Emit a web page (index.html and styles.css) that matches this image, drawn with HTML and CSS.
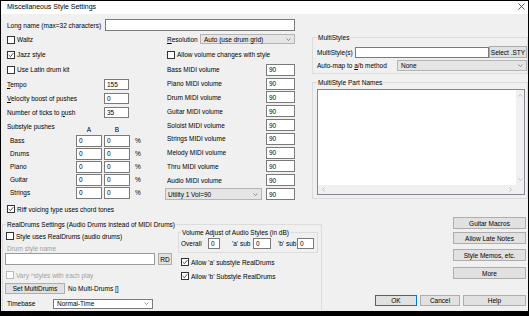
FILE: index.html
```html
<!DOCTYPE html>
<html lang="en">
<head>
    <meta charset="UTF-8">
    <meta name="viewport" content="width=device-width, initial-scale=1.0">
    <title>Miscellaneous Style Settings</title>
    <link rel="stylesheet" href="styles.css">
</head>
<body>
    <div class="dialog">
        <div class="titlebar">
            <span>Miscellaneous Style Settings</span>
            <svg class="close" width="7" height="7" viewBox="0 0 7 7"><path d="M0.5 0.5L6.5 6.5M6.5 0.5L0.5 6.5" stroke="#333" stroke-width="0.8"/></svg>
        </div>

        <div class="top">
            <div class="main">
                <div class="row name-row">
                    <span class="name-label">Long name (max=32 characters)</span>
                    <span class="edit name-edit"></span>
                </div>

                <div class="cols">
                    <!-- left column -->
                    <div class="left">
                        <div class="check-row"><span class="cb"></span>Waltz</div>
                        <div class="check-row"><span class="cb"><svg width="6" height="6" viewBox="0 0 6 6"><path d="M0.7 3L2.4 4.7L5.3 1.2" fill="none" stroke="#222" stroke-width="0.8"/></svg></span>Jazz style</div>
                        <div class="check-row"><span class="cb"></span>Use Latin drum kit</div>

                        <div class="row field-row"><span class="field-label"><u>T</u>empo</span><span class="edit short">155</span></div>
                        <div class="row field-row"><span class="field-label"><u>V</u>elocity boost of pushes</span><span class="edit short">0</span></div>
                        <div class="row field-row"><span class="field-label">Number of ticks to <u>p</u>ush</span><span class="edit short">35</span></div>

                        <div class="pushes">
                            <span>Substyle pushes</span><span class="col-head">A</span><span class="col-head">B</span><span></span>
                            <span class="push-label">Bass</span><span class="edit">0</span><span class="edit">0</span><span class="pct">%</span>
                            <span class="push-label">Drums</span><span class="edit">0</span><span class="edit">0</span><span class="pct">%</span>
                            <span class="push-label">Piano</span><span class="edit">0</span><span class="edit">0</span><span class="pct">%</span>
                            <span class="push-label">Guitar</span><span class="edit">0</span><span class="edit">0</span><span class="pct">%</span>
                            <span class="push-label">Strings</span><span class="edit">0</span><span class="edit">0</span><span class="pct">%</span>
                        </div>

                        <div class="check-row riff-row"><span class="cb"><svg width="6" height="6" viewBox="0 0 6 6"><path d="M0.7 3L2.4 4.7L5.3 1.2" fill="none" stroke="#222" stroke-width="0.8"/></svg></span>Riff voicing type uses chord tones</div>
                    </div>

                    <!-- middle column -->
                    <div class="middle">
                        <div class="row res-row">
                            <span class="res-label"><u>R</u>esolution</span>
                            <span class="combo res-combo">Auto (use drum grid)<svg width="5" height="3" viewBox="0 0 5 3"><path d="M0.5 0.5L2.5 2.5L4.5 0.5" fill="none" stroke="#666" stroke-width="0.7"/></svg></span>
                        </div>
                        <div class="check-row allow-row"><span class="cb"></span>Allow volume changes with style</div>

                        <div class="vol">
                            <span>Bass MIDI volume</span><span class="edit">90</span>
                            <span>Piano MIDI volume</span><span class="edit">90</span>
                            <span>Drum MIDI volume</span><span class="edit">90</span>
                            <span>Guitar MIDI volume</span><span class="edit">90</span>
                            <span>Soloist MIDI volume</span><span class="edit">90</span>
                            <span>Strings MIDI volume</span><span class="edit">90</span>
                            <span>Melody MIDI volume</span><span class="edit">90</span>
                            <span>Thru MIDI volume</span><span class="edit">90</span>
                            <span>Audio MIDI volume</span><span class="edit">90</span>
                            <span class="combo util-combo">Utility 1 Vol=90<svg width="5" height="3" viewBox="0 0 5 3"><path d="M0.5 0.5L2.5 2.5L4.5 0.5" fill="none" stroke="#666" stroke-width="0.7"/></svg></span><span class="edit">90</span>
                        </div>
                    </div>
                </div>
            </div>

            <!-- right column -->
            <div class="right">
                <fieldset class="group multi-group">
                    <legend>MultiStyles</legend>
                    <div class="row multi-row">
                        <span class="multi-label">MultiStyle(s)</span>
                        <span class="edit multi-edit"></span>
                        <span class="btn sty-btn">Select .STY</span>
                    </div>
                    <div class="row map-row">
                        <span class="map-label">Auto-map to <u>a</u>/b method</span>
                        <span class="combo map-combo">None<svg width="5" height="3" viewBox="0 0 5 3"><path d="M0.5 0.5L2.5 2.5L4.5 0.5" fill="none" stroke="#666" stroke-width="0.7"/></svg></span>
                    </div>
                </fieldset>

                <fieldset class="group parts-group">
                    <legend>MultiStyle Part Names</legend>
                    <div class="listbox">
                        <div class="list-area"></div>
                        <div class="vscroll">
                            <svg width="5" height="3" viewBox="0 0 5 3"><path d="M0.5 2.5L2.5 0.5L4.5 2.5" fill="none" stroke="#aaa" stroke-width="0.7"/></svg>
                            <svg width="5" height="3" viewBox="0 0 5 3"><path d="M0.5 0.5L2.5 2.5L4.5 0.5" fill="none" stroke="#aaa" stroke-width="0.7"/></svg>
                        </div>
                        <div class="hscroll">
                            <svg width="3" height="5" viewBox="0 0 3 5"><path d="M2.5 0.5L0.5 2.5L2.5 4.5" fill="none" stroke="#aaa" stroke-width="0.7"/></svg>
                            <svg width="3" height="5" viewBox="0 0 3 5"><path d="M0.5 0.5L2.5 2.5L0.5 4.5" fill="none" stroke="#aaa" stroke-width="0.7"/></svg>
                        </div>
                        <div class="corner"></div>
                    </div>
                </fieldset>
            </div>
        </div>

        <div class="bottom">
            <fieldset class="group realdrums">
                <legend>RealDrums Settings (Audio Drums instead of MIDI Drums)</legend>
                <div class="rd-cols">
                    <div class="rd-left">
                        <div class="check-row rd-check"><span class="cb"></span>Style uses RealDrums (audio drums)</div>
                        <div class="disabled drum-name">Drum style name</div>
                        <div class="row drum-row">
                            <span class="edit drum-edit"></span>
                            <span class="btn rd-btn">RD</span>
                        </div>
                        <div class="check-row rd-check vary-row disabled"><span class="cb off"></span>Vary ^styles with each play</div>
                        <div class="row multidrums-row">
                            <span class="btn multi-btn">Set MultiDrums</span>
                            <span>No Multi-Drums []</span>
                        </div>
                        <div class="row timebase-row">
                            <span class="timebase-label">Timebase</span>
                            <span class="combo timebase-combo">Normal-Time<svg width="5" height="3" viewBox="0 0 5 3"><path d="M0.5 0.5L2.5 2.5L4.5 0.5" fill="none" stroke="#666" stroke-width="0.7"/></svg></span>
                        </div>
                    </div>

                    <div class="rd-right">
                        <fieldset class="group volume-group">
                            <legend>Volume Adjust of Audio Styles (in dB)</legend>
                            <div class="row adjust-row">
                                <span class="adj-overall">Overall</span>
                                <span class="edit adj-edit-o">0</span>
                                <span class="adj-a">'a' sub</span>
                                <span class="edit adj-edit-a">0</span>
                                <span class="adj-b">'b' sub</span>
                                <span class="edit adj-edit-b">0</span>
                            </div>
                        </fieldset>
                        <div class="check-row sub-check first"><span class="cb"><svg width="6" height="6" viewBox="0 0 6 6"><path d="M0.7 3L2.4 4.7L5.3 1.2" fill="none" stroke="#222" stroke-width="0.8"/></svg></span>Allow 'a' substyle RealDrums</div>
                        <div class="check-row sub-check"><span class="cb"><svg width="6" height="6" viewBox="0 0 6 6"><path d="M0.7 3L2.4 4.7L5.3 1.2" fill="none" stroke="#222" stroke-width="0.8"/></svg></span>Allow 'b' Substyle RealDrums</div>
                    </div>
                </div>
            </fieldset>

            <div class="actions">
                <div class="side-buttons">
                    <span class="btn side-btn">Guitar Macros</span>
                    <span class="btn side-btn late">Allow Late Notes</span>
                    <span class="btn side-btn memos">Style Memos, etc.</span>
                    <span class="btn side-btn more">More</span>
                </div>
                <div class="row ok-row">
                    <span class="btn ok-btn">OK</span>
                    <span class="btn cancel-btn">Cancel</span>
                    <span class="btn help-btn">Help</span>
                </div>
            </div>
        </div>
    </div>
</body>
</html>
```

FILE: styles.css
```css
body {
    margin: 0;
    font-family: "Liberation Sans", Arial, sans-serif;
    font-size: 6.5px;
    color: #000;
    background: #fff;
}
.dialog {
    width: 529px;
    height: 316px;
    box-sizing: border-box;
    border: 1px solid #000;
    border-bottom-width: 5px;
    background: #f0f0f0;
    overflow: hidden;
}
.titlebar {
    height: 13px;
    box-sizing: border-box;
    padding: 0 3px 2px 6px;
    background: #fff;
    display: flex;
    justify-content: space-between;
    align-items: center;
    font-size: 7px;
}
.row {
    display: flex;
    align-items: center;
}
u {
    text-decoration-thickness: 0.5px;
    text-underline-offset: 1px;
}

/* controls */
.edit {
    box-sizing: border-box;
    height: 12px;
    border: 1px solid #7a7a7a;
    background: #fff;
    padding-left: 2px;
    display: flex;
    align-items: center;
}
.combo {
    box-sizing: border-box;
    height: 11px;
    border: 1px solid #b4b4b4;
    background: #e5e5e5;
    padding: 0 3px 0 3px;
    display: flex;
    align-items: center;
    justify-content: space-between;
}
.btn {
    box-sizing: border-box;
    height: 12px;
    border: 1px solid #adadad;
    background: #e1e1e1;
    display: flex;
    align-items: center;
    justify-content: center;
}
.cb {
    box-sizing: border-box;
    width: 8px;
    height: 8px;
    border: 1px solid #333;
    background: #fff;
    display: flex;
    align-items: center;
    justify-content: center;
    flex-shrink: 0;
}
.cb.off {
    border-color: #bcbcbc;
}
.check-row {
    display: flex;
    align-items: center;
    gap: 2px;
    height: 15px;
}
.disabled {
    color: #a0a0a0;
}
.group {
    margin: 0;
    min-width: 0;
    box-sizing: border-box;
    border: 1px solid #dcdcdc;
    padding: 0 4px;
}
.group legend {
    padding: 0 1px;
    line-height: 9px;
}

/* top area */
.top {
    display: flex;
    height: 202px;
}
.main {
    margin-left: 6px;
    width: 288px;
}
.name-row {
    margin-top: 5px;
    height: 12px;
}
.name-label {
    width: 98px;
}
.name-edit {
    width: 190px;
}
.cols {
    display: flex;
    margin-top: 1px;
}
.left {
    width: 158px;
}
.field-row {
    height: 14px;
}
.field-label {
    width: 97px;
}
.edit.short {
    width: 25px;
    height: 11px;
}
.pushes {
    display: grid;
    grid-template-columns: 67px 26px 26px 12px;
    grid-template-rows: 15px repeat(5, 13px);
    column-gap: 2px;
    align-items: center;
}
.col-head {
    align-self: end;
    text-align: center;
    line-height: 9px;
}
.push-label {
    padding-left: 3px;
}
.pct {
    padding-left: 3px;
}
.riff-row {
    margin-top: 3px;
    height: 14px;
}

.middle {
    width: 130px;
}
.res-row {
    height: 14px;
    padding-left: 2px;
}
.res-label {
    width: 33px;
}
.res-combo {
    width: 95px;
    height: 10px;
}
.allow-row {
    height: 17px;
    padding-left: 2px;
}
.vol {
    display: grid;
    grid-template-columns: 101px 29px;
    grid-auto-rows: 13.8px;
    align-items: center;
}
.vol > span:nth-child(odd) {
    padding-left: 2px;
}
.vol > .util-combo {
    width: 97px;
    height: 12px;
    padding-left: 3px;
}

.right {
    margin-left: 17px;
    width: 216px;
}
.multi-group {
    margin-top: 19px;
    padding: 0 0 2px 4px;
}
.multi-row {
    margin-top: 4px;
    height: 12px;
}
.multi-label {
    width: 38px;
}
.multi-edit {
    width: 134px;
    height: 11px;
}
.sty-btn {
    flex: 1;
    height: 12px;
}
.map-row {
    margin-top: 1px;
    height: 12px;
}
.map-label {
    width: 80px;
}
.map-combo {
    flex: 1;
}
.parts-group {
    margin-top: 4px;
    padding-bottom: 3px;
}
.listbox {
    margin-top: 2px;
    width: 208px;
    height: 106px;
    box-sizing: border-box;
    border: 1px solid #828790;
    background: #fff;
    display: grid;
    grid-template-columns: 1fr 8px;
    grid-template-rows: 1fr 9px;
}
.vscroll {
    background: #f0f0f0;
    display: flex;
    flex-direction: column;
    justify-content: space-between;
    align-items: center;
    padding: 4px 0;
}
.hscroll {
    background: #f0f0f0;
    display: flex;
    justify-content: space-between;
    align-items: center;
    padding: 0 4px;
}
.corner {
    background: #f0f0f0;
}

/* bottom area */
.bottom {
    display: flex;
    height: 96px;
}
.realdrums {
    margin: 3.5px 0 0 1px;
    width: 320px;
    height: 100px;
    padding: 0 2px;
}
.realdrums > legend {
    margin-left: 1px;
}
.rd-cols {
    display: flex;
}
.rd-left {
    width: 167px;
}
.rd-check {
    padding-left: 1px;
}
.drum-name {
    height: 9px;
    line-height: 9px;
    padding-left: 2px;
}
.drum-row {
    margin-top: 0.5px;
    height: 12px;
}
.drum-edit {
    width: 150px;
    border-color: #9a9a9a;
}
.rd-btn {
    margin-left: 3px;
    width: 14px;
}
.vary-row {
    margin-top: 3px;
    height: 14px;
}
.multidrums-row {
    margin-top: 1px;
    height: 11px;
    gap: 3px;
}
.multi-btn {
    width: 60px;
    height: 11px;
}
.timebase-row {
    margin-top: 4px;
    height: 11px;
}
.timebase-label {
    width: 46px;
    padding-left: 2px;
}
.timebase-combo {
    width: 100px;
    height: 10px;
    background: #fff;
    border-color: #7a7a7a;
}

.rd-right {
    margin-left: 6px;
    width: 140px;
}
.volume-group {
    margin-top: -1px;
    padding: 0 2px 3px 2px;
}
.adjust-row {
    margin-top: 1px;
    height: 11px;
}
.adjust-row .edit {
    height: 11px;
}
.adj-overall {
    width: 27px;
}
.adj-edit-o {
    width: 12px;
}
.adj-a {
    margin-left: 12px;
    width: 21px;
}
.adj-edit-a {
    width: 18px;
}
.adj-b {
    margin-left: 7px;
    width: 19px;
}
.adj-edit-b {
    width: 17px;
}
.sub-check {
    height: 14px;
    padding-left: 3px;
}
.sub-check.first {
    margin-top: 2.5px;
}

.actions {
    flex: 1;
    display: flex;
    flex-direction: column;
    align-items: flex-end;
    padding-right: 2px;
}
.side-buttons {
    width: 73px;
    margin-top: 1px;
    display: flex;
    flex-direction: column;
}
.side-btn.late {
    margin-top: 3px;
}
.side-btn.memos {
    margin-top: 5px;
}
.side-btn.more {
    margin-top: 6px;
}
.ok-row {
    margin-top: 16px;
    gap: 3px;
}
.ok-row .btn {
    height: 11px;
}
.ok-btn {
    width: 42px;
    border-color: #0078d7;
}
.cancel-btn {
    width: 40px;
}
.help-btn {
    width: 63px;
}
```
